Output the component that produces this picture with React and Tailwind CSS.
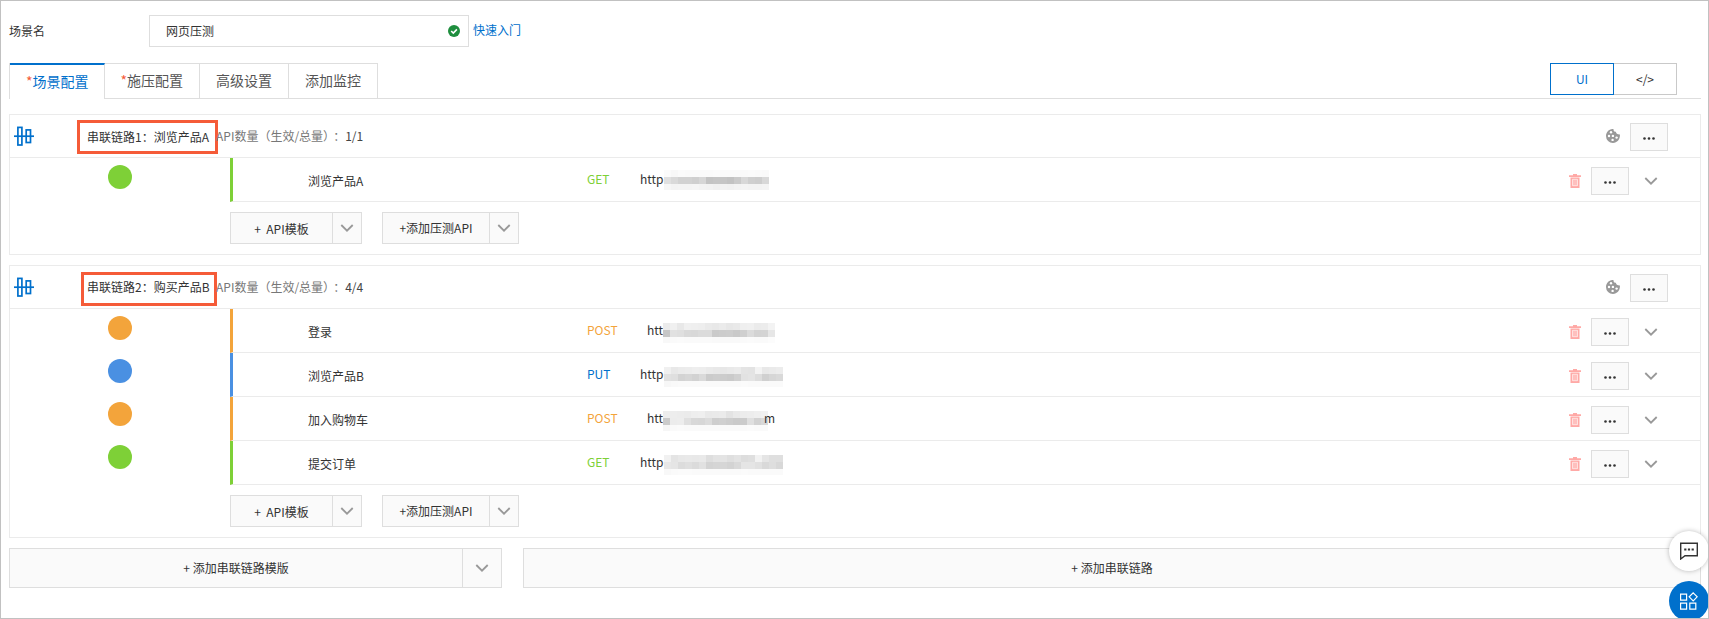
const METHODS = {
  GET: { bar: 'border-l-[#7ed037]', dot: 'bg-[#7ed037]', text: 'text-[#7ed037]' },
  POST: { bar: 'border-l-[#f3a43b]', dot: 'bg-[#f3a43b]', text: 'text-[#f3a43b]' },
  PUT: { bar: 'border-l-[#4a90e2]', dot: 'bg-[#4a90e2]', text: 'text-[#0070cc]' },
};

const chains = [
  {
    title: '串联链路1：浏览产品A',
    count: '1/1',
    frame: 'mt-px ml-[63px] w-[141px] pl-[7px] leading-7',
    maskPad: '',
    apis: [{
      name: '浏览产品A', method: 'GET', prefix: 'http', suffix: '',
      mask: ['fbf8fbfafafafafbfafafafafbfaf9', 'e0d9d2d2cfd6c3c5c5c2cad8cfcdd8', 'f6f3f4f4f5f3f2f0f2f1f3f4f3f3f4'],
    }],
  },
  {
    title: '串联链路2：购买产品B',
    count: '4/4',
    frame: 'mt-1 ml-[67px] w-[136px] pl-[3px] leading-6',
    maskPad: 'pt-1',
    apis: [
      { name: '登录', method: 'POST', prefix: 'htt', suffix: '', mask: ['ebf0e8f0efeeeae8ebe7e9eff0ebecf3', 'c6e1dfd9d8dbdbcacccdc9cfdbd3d4e6', 'f8fafbfafafafaf9f9f9f9fafbfafafc'] },
      { name: '浏览产品B', method: 'PUT', prefix: 'http', suffix: '', mask: ['f0e8ebeceeedeae8e7e9ebe4e3f3e8eaec', 'e1dfd3d6d2dacbcdcccad0e2e4ddd0d6d9', 'f7f9fafafafafafafafafafbfafafafafa'] },
      { name: '加入购物车', method: 'POST', prefix: 'htt', suffix: 'm', mask: ['ededecebeeefe9eaebe3e9ecedeff1', 'cbecede0d8d7dcced0cdcacbdfd2d8', 'f6fafbfafafafafafafafafafbfafa'] },
      { name: '提交订单', method: 'GET', prefix: 'http', suffix: '', mask: ['f1e4e8e9e8e9dee3e4dfe3dddff2e5dfdf', 'e7e5dcdfdbe1d3d5d6d3d9e5e5e1d9ded8', 'f8fafbfbfafafafafafafafbfafafafafa'] },
    ],
  },
];

function Chevron() {
  return (
    <svg width="14" height="14" viewBox="0 0 14 14" fill="none" stroke="#999" strokeWidth="1.8" aria-hidden="true">
      <path d="M1.3 4 7 9.7 12.7 4" />
    </svg>
  );
}

function ChainIcon() {
  return (
    <svg width="20" height="20" viewBox="0 0 20 20" fill="none" stroke="#0070cc" strokeWidth="1.7" aria-hidden="true">
      <rect x="3.9" y="1.4" width="4" height="17.600" />
      <rect x="12.200" y="3.900" width="4.300" height="12.600" />
      <path d="M0 10.200h20.500" />
    </svg>
  );
}

function CookieIcon() {
  return (
    <svg width="14" height="14" viewBox="0 0 14 14" aria-hidden="true">
      <path fill="#999" d="M7.500 0c-.2 1.800.8 2.800 2.400 2.800.1 1.600 1.200 2.600 4 2.700.4 4.700-2.500 8.500-6.900 8.500A7 7 0 0 1 0 7C0 3 3.300-.3 7.500 0z" />
      <g fill="#fff">
        <circle cx="5" cy="3.300" r="1.200" />
        <circle cx="3" cy="7" r="1.200" />
        <circle cx="6.900" cy="6.900" r="1.200" />
        <circle cx="6.600" cy="10.900" r="1.200" />
        <circle cx="10.600" cy="8.600" r="1.200" />
      </g>
    </svg>
  );
}

function TrashIcon() {
  return (
    <svg width="12" height="14" viewBox="0 0 12 14" aria-hidden="true">
      <path fill="#ffa9a6" d="M0 1.200h4V0h4v1.200h4V3H0zM1.500 3.500h9V14h-9z" />
      <path fill="#ffc0be" stroke="#fff" strokeWidth=".6" d="M3.500 5.300h5v6.400h-5z" />
    </svg>
  );
}

function MoreButton() {
  return (
    <button aria-label="更多" className="flex h-7 w-[38px] items-center justify-center border border-[#dedede] bg-[#fafafa] pt-[3px]">
      <svg width="12" height="3" viewBox="0 0 12 3" fill="#333" aria-hidden="true">
        <circle cx="1.500" cy="1.500" r="1.300" />
        <circle cx="6" cy="1.500" r="1.300" />
        <circle cx="10.500" cy="1.500" r="1.300" />
      </svg>
    </button>
  );
}

// Pixelated part of an address, one two-digit grey per cell
function Mask({ rows }) {
  return (
    <span className="flex flex-col" aria-hidden="true">
      {rows.map((row, i) => (
        <span key={i} className="flex">
          {row.match(/../g).map((v, j) => (
            <span key={j} className={i === 2 ? 'h-[6px] w-[7px]' : 'h-[7px] w-[7px]'} style={{ backgroundColor: `#${v}${v}${v}` }} />
          ))}
        </span>
      ))}
    </span>
  );
}

function SplitButton({ label, main, more }) {
  return (
    <div className="flex border border-[#dedede] bg-[#fafafa]">
      <button className={`${main} whitespace-pre text-center`}>{label}</button>
      <button aria-label={`${label} 更多`} className={`${more} flex items-center justify-center border-l border-[#dedede]`}>
        <Chevron />
      </button>
    </div>
  );
}

function ApiRow({ api, maskPad }) {
  const color = METHODS[api.method];
  return (
    <div className={`flex h-11 items-center border-b border-l-3 border-b-[#ebebeb] ${color.bar}`}>
      <span className="w-[354px] pt-[3px] pl-[75px]">{api.name}</span>
      <span className={`w-[53px] pb-0.5 ${color.text}`}>{api.method}</span>
      <span className={`flex items-center ${api.method === 'POST' ? 'pl-[7px]' : ''}`}>
        <span className="pb-px">{api.prefix}</span>
        <span className={maskPad}><Mask rows={api.mask} /></span>
        <span className="-ml-1 pb-px">{api.suffix}</span>
      </span>
      <div className="ml-auto flex items-center pt-[3px] pr-[42px]">
        <button aria-label="删除" className="mr-[10px]"><TrashIcon /></button>
        <MoreButton />
        <button aria-label="展开" className="ml-[15px]"><Chevron /></button>
      </div>
    </div>
  );
}

function ChainCard({ chain }) {
  return (
    <section className="mb-[10px] border border-[#ebebeb]">
      <header className="flex h-[43px] items-center border-b border-[#ebebeb]">
        <div className="flex w-[206px] shrink-0 items-center pl-1">
          <div className="w-0"><ChainIcon /></div>
          <h2 className={`${chain.frame} h-[34px] shrink-0 border-[3px] border-[#f55b38] whitespace-nowrap`}>
            {chain.title}
          </h2>
        </div>
        <p className="text-[#777]">
          API数量（生效/总量）<span className="pl-1">：</span>
          <span className="text-[#444]">{chain.count}</span>
        </p>
        <div className="ml-auto flex items-center gap-[10px] pr-8 pt-px">
          <div className="pb-0.5"><CookieIcon /></div>
          <MoreButton />
        </div>
      </header>
      <div className="flex">
        <div className="flex w-[220px] shrink-0 flex-col gap-[19px] pt-[7px] pl-[98px]">
          {chain.apis.map((api) => (
            <span key={api.name} className={`h-6 w-6 rounded-full ${METHODS[api.method].dot}`} />
          ))}
        </div>
        <div className="grow">
          {chain.apis.map((api) => <ApiRow key={api.name} api={api} maskPad={chain.maskPad} />)}
          <div className="flex gap-5 py-[10px]">
            <SplitButton label="+  API模板" main="h-[30px] w-[101px] pt-0.5" more="w-[29px]" />
            <SplitButton label="+添加压测API" main="h-[30px] w-[106px]" more="w-[29px]" />
          </div>
        </div>
      </div>
    </section>
  );
}

const tabs = [
  { label: '场景配置', required: true },
  { label: '施压配置', required: true },
  { label: '高级设置' },
  { label: '添加监控' },
];

export default function App() {
  return (
    <div className="relative overflow-hidden border border-[#c1c1c1] bg-white pt-[14px] pr-[7px] pb-[30px] pl-2 font-['Noto_Sans_CJK_SC',sans-serif] text-xs leading-[18px] text-[#333]">
      <div className="flex items-center">
        <label htmlFor="scene" className="w-[140px]">场景名</label>
        <div className="flex h-8 w-[320px] items-center border border-[#dedede] pr-2">
          <input id="scene" defaultValue="网页压测" className="w-full pl-4 outline-none" />
          <svg width="12" height="12" viewBox="0 0 12 12" className="shrink-0" aria-hidden="true">
            <circle cx="6" cy="6" r="6" fill="#1e8e3e" />
            <path d="m3.200 6 2.100 2.100 3.600-3.700" fill="none" stroke="#fff" strokeWidth="1.600" />
          </svg>
        </div>
        <a href="#start" className="ml-1 pb-0.5 text-[#0070cc]">快速入门</a>
      </div>

      <div className="mt-4 flex justify-between border-b border-[#dedede]">
        <div className="-mb-px flex border-l border-[#dedede] text-sm" role="tablist">
          {tabs.map((tab, i) => (
            <button
              key={tab.label}
              role="tab"
              aria-selected={i === 0}
              className={`h-9 border-r border-r-[#dedede] pb-0.5 ${i === 0 ? 'border-t-2 border-t-[#0070cc] bg-white pr-[15px] pl-4 text-[#0070cc]' : 'border-y border-y-[#dedede] px-4 text-[#555]'}`}
            >
              {tab.required && <span className="text-[#f55b38]">*</span>}
              {tab.label}
            </button>
          ))}
        </div>
        <div className="mr-6 flex">
          <button className="h-8 w-16 border border-[#0070cc] text-[#0070cc]">UI</button>
          <button className="h-8 w-[63px] border border-l-0 border-[#c9c9c9]">&lt;/&gt;</button>
        </div>
      </div>

      <main className="mt-[15px]">
        {chains.map((chain) => <ChainCard key={chain.title} chain={chain} />)}
        <div className="flex gap-[21px]">
          <SplitButton label="+ 添加串联链路模版" main="h-[38px] w-[452px]" more="w-[39px]" />
          <button className="h-10 grow border border-[#dedede] bg-[#fafafa]">+ 添加串联链路</button>
        </div>
      </main>

      <div className="absolute -right-px -bottom-[3px] flex flex-col gap-[10px]">
        <button aria-label="反馈" className="flex h-10 w-10 items-center justify-center rounded-full bg-white shadow-[0_0_5px_#0004]">
          <svg width="18" height="18" viewBox="0 0 18 18" fill="none" stroke="#333" strokeWidth="1.400" aria-hidden="true">
            <path d="M.7 1.200h16.600v12.500H5L.7 17z" />
            <path d="M4.200 7.400h9.600" strokeWidth="2" strokeDasharray="2.200 1.500" />
          </svg>
        </button>
        <button aria-label="应用" className="flex h-10 w-10 items-center justify-center rounded-full bg-[#0070cc]">
          <svg width="18" height="18" viewBox="0 0 18 18" fill="none" stroke="#fff" strokeWidth="1.200" aria-hidden="true">
            <path d="M.6 2.200h6v6h-6zM.6 11.200h6v6h-6zM9.800 11.200h6v6h-6zM13.200.8l4 4-4 4-4-4z" />
          </svg>
        </button>
      </div>
    </div>
  );
}
